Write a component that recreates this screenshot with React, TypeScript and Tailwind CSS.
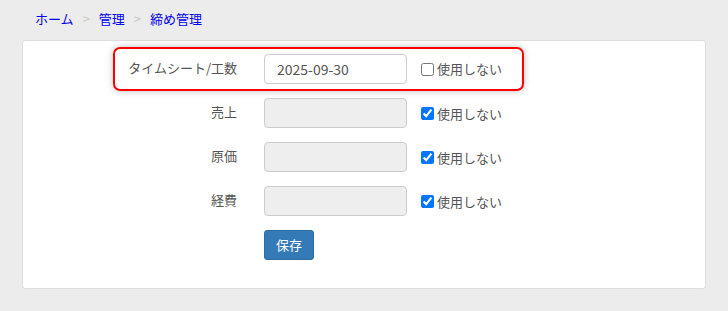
const font = { fontFamily: '"Noto Sans CJK JP", "Noto Sans", sans-serif' }

type Row = { label: string; value: string; disabled: boolean; unused: boolean; highlight?: boolean }

const rows: Row[] = [
  { label: 'タイムシート/工数', value: '2025-09-30', disabled: false, unused: false, highlight: true },
  { label: '売上', value: '', disabled: true, unused: true },
  { label: '原価', value: '', disabled: true, unused: true },
  { label: '経費', value: '', disabled: true, unused: true },
]

function FormRow({ row }: { row: Row }) {
  return (
    <div
      className={
        'flex items-center h-[44px] w-[411px] rounded-[7px] border-2 ' +
        (row.highlight ? 'border-[#ff0000] shadow-[0_0_7px_rgba(0,0,0,0.25)]' : 'border-transparent')
      }
    >
      <div className="w-[122px] text-right text-[13px] leading-[18px] text-[#555] -mt-[3px]">{row.label}</div>
      <input
        type="text"
        readOnly
        disabled={row.disabled}
        value={row.value}
        className={
          'ml-[27px] w-[143px] h-[30px] rounded-[4px] border border-[#ccc] px-[12px] text-[14px] text-[#555] outline-none ' +
          (row.disabled ? 'bg-[#eeeeee]' : 'bg-white')
        }
        style={font}
      />
      <label className={'flex items-center ml-[14px] text-[13px] leading-[18px] text-[#555] ' + (row.unused ? 'mt-[1px]' : '')}>
        <input type="checkbox" readOnly checked={row.unused} className="w-[13px] h-[13px] m-0 accent-[#0075ff]" />
        <span className="ml-[3px]">使用しない</span>
      </label>
    </div>
  )
}

export default function App() {
  return (
    <div className="min-h-[311px] bg-[#ececec] pb-[22px]" style={font}>
      <nav className="flex items-center h-[40px] pl-[35px] pb-[3px] text-[13px] leading-[18px]">
        <span className="text-[#0000ee]">ホーム</span>
        <span className="px-[9px] text-[#c8c8c8]">&gt;</span>
        <span className="text-[#0000ee]">管理</span>
        <span className="px-[9px] text-[#c8c8c8]">&gt;</span>
        <span className="text-[#0000ee]">締め管理</span>
      </nav>
      <div className="mx-[22px] h-[249px] bg-white border border-[#dddddd] rounded-[3px] pt-[6px]">
        <div className="ml-[90px] flex flex-col">
          {rows.map((r) => (
            <FormRow key={r.label} row={r} />
          ))}
        </div>
        <div className="ml-[241px] mt-[7px]">
          <button className="h-[30px] px-[11px] rounded-[3px] bg-[#337ab7] border border-[#2e6da4] text-white text-[13px] leading-[18px]">
            保存
          </button>
        </div>
      </div>
    </div>
  )
}
